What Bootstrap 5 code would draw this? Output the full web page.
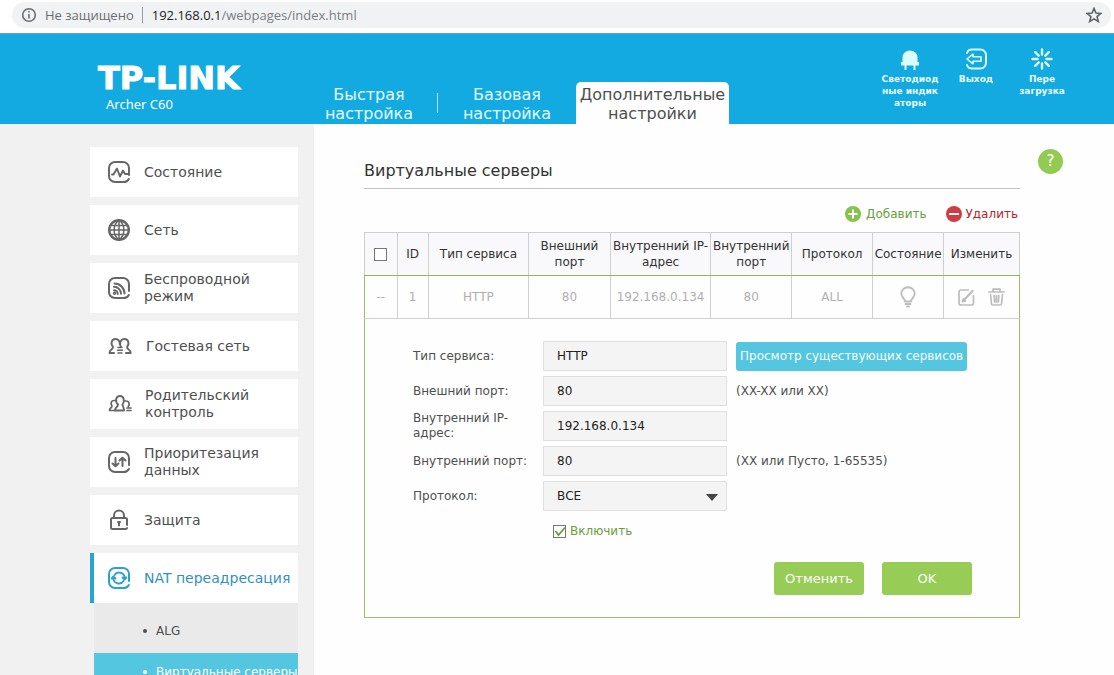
<!DOCTYPE html>
<html lang="ru">
<head>
<meta charset="utf-8">
<meta name="viewport" content="width=device-width, initial-scale=1">
<title>TP-LINK Archer C60</title>
<link rel="stylesheet" href="https://cdn.jsdelivr.net/npm/bootstrap@5.3.0/dist/css/bootstrap.min.css">
<style>
  body { font-family: Verdana, "DejaVu Sans", sans-serif; font-size: 12px; line-height: 16px; color: #4f4f4f; background: #fefefe; }
  a { color: inherit; text-decoration: none; }
  svg { display: block; flex: none; }
  .ico { fill: none; stroke: currentColor; stroke-width: 2; stroke-linecap: round; stroke-linejoin: round; }

  /* address bar */
  .addr { height: 33px; padding: 2px 3px 5px 12px; background: #fff; }
  .addr-pill { background: #f1f2f4; border-radius: 13px; padding: 0 9px 0 9px; font: 13px/26px "Open Sans", "Noto Sans", sans-serif; color: #6a6d71; }
  .addr-sep { width: 1px; height: 16px; background: #9b9da0; margin: 0 9px 0 8px; }
  .addr-url { color: #7b7e82; }
  .addr-url b { font-weight: 400; color: #222; }

  /* header */
  .top { height: 91px; background: #12aae0; border-top: 1px solid #55a9c4; color: #fff; }
  .brand { width: 300px; padding: 26px 0 0 98px; }
  .brand-name { font: 700 32px/36px "DejaVu Sans", sans-serif; -webkit-text-stroke: 1px #fff; }
  .brand-model { padding-left: 8px; font: 13px/16px "Noto Sans", sans-serif; }
  .tab { width: 138px; height: 42px; font-size: 16px; line-height: 19px; padding-top: 3px; text-align: center; color: #e6fbff; }
  .tab-line { width: 1px; height: 20px; margin: 0 0 11px -1px; background: #b5e5f5; }
  .tab-on { width: 153px; background: #fefefe; color: #4f4f4f; border-radius: 5px 5px 0 0; }
  .tools { padding: 14px 39px 0 0; }
  .tool { width: 66px; font-size: 9px; font-weight: 700; line-height: 12px; text-align: center; color: #e9fcff; }
  .tool svg { margin: 0 auto 3px; color: #dcfaff; }

  /* sidebar */
  .side { flex: 0 0 314px; min-width: 0; background: #f2f1f2; padding: 23px 16px 0 90px; }
  .side-item { height: 50px; margin-bottom: 8px; padding-left: 17px; background: #fff; font-size: 14px; line-height: 17px; }
  .side-item svg { margin-right: 13px; color: #666; }
  .side-item.on { border-left: 4px solid #26a6cd; padding-left: 13px; margin-bottom: 0; color: #3391bd; white-space: nowrap; }
  .side-item.on svg { color: #2ba2cc; }
  .sub { margin-left: 4px; height: 50px; padding: 6px 0 0 49px; background: #eaeaea; white-space: nowrap; }
  .sub::before { content: ""; width: 4px; height: 4px; border-radius: 2px; background: currentColor; margin-right: 9px; }
  .sub.on { background: #54c6e0; color: #fff; padding-top: 0; padding-bottom: 12px; }

  /* content */
  .main { padding: 25px 51px 30px 50px; gap: 18px; }
  .page-title { font-size: 16px; line-height: 24px; color: #333; font-weight: 400; padding: 10px 0 5px; border-bottom: 1px solid #c4c4c4; margin: 0; }
  .help { flex: none; width: 25px; height: 25px; border-radius: 50%; border: 0; padding: 0; background: #93cb52; color: #fff; font-size: 15px; line-height: 25px; }
  .acts { height: 43px; padding: 17px 2px 0 0; gap: 19px; }
  .act { border: 0; background: none; padding: 0; gap: 5px; color: #67a03c; }
  .act.del { color: #b7242b; gap: 4px; }
  .grid-tbl { width: 100%; table-layout: fixed; border-collapse: collapse; text-align: center; }
  .grid-tbl th, .grid-tbl td { height: 43px; padding: 0; border: 1px solid #cfcfcf; vertical-align: middle; }
  .grid-tbl thead th { font-weight: 400; color: #333; background: #f9f8fa; border-bottom-color: #93b35c; }
  .grid-tbl td { color: #b0b0b0; }
  .grid-tbl td:first-child { border-left-color: #9cbd6a; }
  .grid-tbl td:last-child { border-right-color: #9cbd6a; }
  .icon-btn { border: 0; background: none; padding: 0; color: #bdbdbd; }
  .icon-btn svg { margin: 0 auto; }
  .box { appearance: none; width: 13px; height: 13px; border: 1px solid #777; background: #fff; display: block; margin: 0 auto; }
  .panel { border: 1px solid #9cbd6a; border-top: 0; padding: 22px 47px 22px 48px; }
  .frow { display: grid; grid-template-columns: 130px 184px 1fr; min-height: 30px; margin-bottom: 5px; align-items: center; line-height: 15px; }
  .field { width: 184px; height: 30px; border: 1px solid #dfdfdf; border-radius: 0; background: #f4f4f4; padding: 0 13px; color: #222; font-size: 12px; }
  .pick { position: relative; }
  .pick select { appearance: none; }
  .pick svg { position: absolute; right: 9px; top: 13px; pointer-events: none; }
  .hint { padding-left: 9px; }
  .view { height: 29px; border: 0; border-radius: 3px; background: #54c6e0; color: #f4fdff; padding: 0 4px; white-space: nowrap; }
  .enable { padding: 7px 0 0 140px; gap: 4px; color: #67a03c; }
  .enable .box { margin: 0; background: #fff; }
  .tick { position: relative; }
  .tick svg { position: absolute; left: 0; top: 0; pointer-events: none; }
  .btns { margin-top: 23px; gap: 18px; }
  .go { width: 90px; height: 33px; border: 0; border-radius: 3px; background: #97cc57; color: #fff; font-size: 13px; }
</style>
</head>
<body>
<div class="vh-100 overflow-hidden d-flex flex-column">

  <div class="addr flex-shrink-0">
    <div class="addr-pill d-flex align-items-center">
      <svg width="16" height="16" viewBox="0 0 16 16" class="ico me-2"><g stroke-width="1.6"><circle cx="8" cy="8" r="6.3"/><path d="M8 7.500v3.600M8 4.600v.4"/></g></svg>
      <span>Не защищено</span>
      <span class="addr-sep"></span>
      <span class="addr-url flex-grow-1"><b>192.168.0.1</b>/webpages/index.html</span>
      <svg width="16" height="16" viewBox="0 0 14 14" fill="none" stroke="#5f6368" stroke-width="1.400"><path d="M7 1.200l1.700 4 4.400.4-3.400 2.800 1.100 4.300L7 10.400l-3.800 2.300 1.100-4.300L.9 5.600l4.400-.4z"/></svg>
    </div>
  </div>

  <header class="top d-flex flex-shrink-0">
    <div class="brand flex-shrink-0">
      <div class="brand-name">TP-LINK</div>
      <div class="brand-model">Archer C60</div>
    </div>
    <nav class="d-flex align-items-end">
      <a href="#" class="tab">Быстрая<br>настройка</a>
      <span class="tab-line"></span>
      <a href="#" class="tab">Базовая<br>настройка</a>
      <a href="#" class="tab tab-on">Дополнительные настройки</a>
    </nav>
    <div class="tools d-flex ms-auto">
      <a href="#" class="tool"><svg width="22" height="22" viewBox="0 0 22 22" fill="currentColor"><path d="M3.500 14V9.500a7.500 7 0 0 1 15 0V14h1.500v3.500h-3.500V22h-2v-4.500h-7V22h-2v-4.500H2V14z"/></svg>Светодиод<br>ные индик<br>аторы</a>
      <a href="#" class="tool"><svg width="22" height="22" viewBox="0 0 22 22" class="ico"><path d="M2 5V5q1-3.500 5-3.500h8.500a5.500 5.500 0 0 1 5.500 5.500v8a5.500 5.500 0 0 1-5.500 5.500H7q-4 0-5-3.500"/><path stroke-width="1.600" d="M2 11l6-4.800v2.500h8v4.600H8v2.500z"/></svg>Выход</a>
      <a href="#" class="tool"><svg width="22" height="22" viewBox="0 0 22 22" class="ico"><path stroke-width="2.400" d="M11 1.500v5M11 15.500v5M1.500 11h5M15.500 11h5M4.200 4.200l3.500 3.500M14.300 14.300l3.500 3.500M4.200 17.800l3.500-3.500M14.300 7.700l3.500-3.500"/></svg>Пере<br>загрузка</a>
    </div>
  </header>

  <div class="d-flex flex-grow-1">
    <aside class="side">
      <a href="#" class="side-item d-flex align-items-center"><svg width="24" height="24" viewBox="0 0 24 24" class="ico"><path d="M22 15V8a6 6 0 0 0-6-6H8a6 6 0 0 0-6 6v8a6 6 0 0 0 6 6h8q4.500 0 5.800-3"/><path stroke-width="1.900" d="M5 14.500h1.500l3.500-6 3 8 3-6 2 3.500h3"/></svg>Состояние</a>
      <a href="#" class="side-item d-flex align-items-center"><svg width="24" height="24" viewBox="0 0 24 24" class="ico"><circle cx="12" cy="12" r="9.800" stroke-width="2.400"/><path stroke-width="1.500" d="M12 2v20M2 12h20M3.500 7.500h17M3.500 16.500h17M12 2c-6.500 5-6.500 15 0 20M12 2c6.500 5 6.500 15 0 20"/></svg>Сеть</a>
      <a href="#" class="side-item d-flex align-items-center"><svg width="24" height="24" viewBox="0 0 24 24" class="ico"><path d="M22 15V8a6 6 0 0 0-6-6H8a6 6 0 0 0-6 6v8a6 6 0 0 0 6 6h8q4.500 0 5.800-3"/><path stroke-width="2" d="M7.500 7.500a10 10 0 0 1 10 10M7 10.800a7 7 0 0 1 7 7M7 14.200a3.700 3.700 0 0 1 3.700 3.700"/><circle cx="7.500" cy="17.300" r=".7"/></svg>Беспроводной<br>режим</a>
      <a href="#" class="side-item d-flex align-items-center"><svg width="26" height="24" viewBox="0 0 26 24" class="ico"><path stroke-width="1.900" d="M7 19H2.500c0-4 3.500-3 3.500-6-3-4-1-8 2.500-8 3 0 4.500 2.500 4.200 5M19 19h4.700c0-4-3.700-3-3.700-6 3-4 1-8-2.500-8-3 0-4.700 2.500-4.300 5-.2 1.500.3 2 .8 3"/><path stroke-width="1.400" d="M11 13.500h4M10.500 16.300h5M11 19h4"/></svg>Гостевая сеть</a>
      <a href="#" class="side-item d-flex align-items-center"><svg width="25" height="24" viewBox="0 0 25 24" class="ico"><path stroke-width="1.900" d="M17 18.500H8c0-4 3-3 3-6C7.500 9 9 4 13 4s5 5 2.500 8.500c0 2 1.500 2 1.500 6z"/><path stroke-width="1.700" d="M8 18.500H2.500c0-3 2.500-2.500 2.500-4.500-2-3-.5-5.500 2-5.500h1.500M17.500 9h1.500c3 0 4 3 2.300 5.500M20 16h4M20 18.500h4"/></svg>Родительский<br>контроль</a>
      <a href="#" class="side-item d-flex align-items-center"><svg width="24" height="24" viewBox="0 0 24 24" class="ico"><path d="M22 15V8a6 6 0 0 0-6-6H8a6 6 0 0 0-6 6v8a6 6 0 0 0 6 6h8q4.500 0 5.800-3"/><path stroke-width="2" d="M8.500 8v7.500M5.500 13.500l3 2.700 3-2.700M15.500 16V8.500M12.500 10.500l3-2.700 3 2.700"/></svg>Приоритезация<br>данных</a>
      <a href="#" class="side-item d-flex align-items-center"><svg width="24" height="24" viewBox="0 0 24 24" class="ico"><path d="M20 17v-5.500q0-1.500-1.500-1.500h-13Q4 10 4 11.500v8Q4 21 5.500 21h13q1.500 0 1.500-1"/><path d="M7 10V7.500a5 5 0 0 1 10 0V10M12 14v3.500M11 14h2"/></svg>Защита</a>
      <a href="#" class="side-item on d-flex align-items-center"><svg width="24" height="24" viewBox="0 0 24 24" class="ico"><path d="M22 15V8a6 6 0 0 0-6-6H8a6 6 0 0 0-6 6v8a6 6 0 0 0 6 6h8q4.500 0 5.800-3"/><path stroke-width="1.900" d="M7.500 9a5.500 5.500 0 0 1 10 4M16.500 15a5.500 5.500 0 0 1-10-4M4.700 12.500l1.800-2 2 2M15.500 11.500l2 2 1.800-2"/></svg>NAT переадресация</a>
      <a href="#" class="sub d-flex align-items-center">ALG</a>
      <a href="#" class="sub on d-flex align-items-center">Виртуальные серверы</a>
    </aside>

    <main class="main d-flex align-items-start flex-grow-1">
      <section class="flex-grow-1">
        <h1 class="page-title">Виртуальные серверы</h1>
        <div class="acts d-flex justify-content-end align-items-start">
          <button type="button" class="act d-flex align-items-center"><svg width="16" height="16" viewBox="0 0 16 16"><circle cx="8" cy="8" r="8" fill="#86c24c"/><path d="M8 3.500v9M3.500 8h9" stroke="#fff" stroke-width="2"/></svg>Добавить</button>
          <button type="button" class="act del d-flex align-items-center"><svg width="16" height="16" viewBox="0 0 16 16"><circle cx="8" cy="8" r="8" fill="#cf3d42"/><path d="M3 8h10" stroke="#fff" stroke-width="2"/></svg>Удалить</button>
        </div>
        <table class="grid-tbl">
          <colgroup><col style="width:5%"><col style="width:4.700%"><col style="width:15.400%"><col style="width:12.400%"><col style="width:15.400%"><col style="width:12.300%"><col style="width:12.400%"><col style="width:10.800%"><col style="width:11.600%"></colgroup>
          <thead>
            <tr><th><input type="checkbox" class="box" aria-label="Выбрать все"></th><th>ID</th><th>Тип сервиса</th><th>Внешний порт</th><th>Внутренний IP-адрес</th><th>Внутренний порт</th><th>Протокол</th><th>Состояние</th><th>Изменить</th></tr>
          </thead>
          <tbody>
            <tr><td>--</td><td>1</td><td>HTTP</td><td>80</td><td>192.168.0.134</td><td>80</td><td>ALL</td>
              <td><button type="button" class="icon-btn align-middle" aria-label="Состояние"><svg width="16" height="22" viewBox="0 0 16 22" class="ico"><path stroke-width="1.900" d="M5 15.500c0-3-3.700-4-3.700-8a6.700 6.200 0 0 1 13.400 0c0 4-3.700 5-3.700 8z"/><path d="M5.500 18h5M7 20.500h2"/></svg></button></td>
              <td><div class="d-flex justify-content-center" style="gap:13px">
                <button type="button" class="icon-btn" aria-label="Изменить"><svg width="17" height="18" viewBox="0 0 17 18" class="ico"><path stroke-width="1.700" d="M10.500 2H3Q1 2 1 4v11q0 2 2 2h10.500q2 0 2-2V7.500"/><path stroke-width="2.200" d="M6 12l8.500-9M4.800 13.400l.7-2.300 1.700 1.600z"/></svg></button>
                <button type="button" class="icon-btn" aria-label="Удалить"><svg width="17" height="18" viewBox="0 0 17 18" class="ico"><path stroke-width="1.700" d="M1 4h15M5 4V1.200h7V4M2.500 6.500l1 9.500q.1 1 1.200 1h7.600q1.100 0 1.200-1l1-9.500M6.200 7.500l.4 6.500M10.800 7.500l-.4 6.500M8.500 7.500V14"/></svg></button>
              </div></td></tr>
          </tbody>
        </table>
        <form class="panel">
          <div class="frow"><label for="svc">Тип сервиса:</label><input id="svc" class="field" value="HTTP"><div class="hint"><button type="button" class="view">Просмотр существующих сервисов</button></div></div>
          <div class="frow"><label for="ext">Внешний порт:</label><input id="ext" class="field" value="80"><span class="hint">(XX-XX или XX)</span></div>
          <div class="frow"><label for="ip">Внутренний IP-<br>адрес:</label><input id="ip" class="field" value="192.168.0.134"></div>
          <div class="frow"><label for="int">Внутренний порт:</label><input id="int" class="field" value="80"><span class="hint">(XX или Пусто, 1-65535)</span></div>
          <div class="frow"><label for="proto">Протокол:</label><div class="pick"><select id="proto" class="field"><option>ВСЕ</option></select><svg width="12" height="7" viewBox="0 0 12 7"><path d="M0 0h12L6 7z" fill="#444"/></svg></div></div>
          <div class="enable d-flex align-items-center"><span class="tick"><input type="checkbox" id="en" class="box" checked><svg width="13" height="13" viewBox="0 0 13 13" fill="none" stroke="#67a03c" stroke-width="1.800"><path d="M2.500 6l3 4L12 2.500"/></svg></span><label for="en">Включить</label></div>
          <div class="btns d-flex justify-content-end"><button type="button" class="go">Отменить</button><button type="button" class="go">OK</button></div>
        </form>
      </section>
      <button type="button" class="help" aria-label="Справка">?</button>
    </main>
  </div>
</div>
<script src="https://cdn.jsdelivr.net/npm/bootstrap@5.3.0/dist/js/bootstrap.bundle.min.js"></script>
</body>
</html>
